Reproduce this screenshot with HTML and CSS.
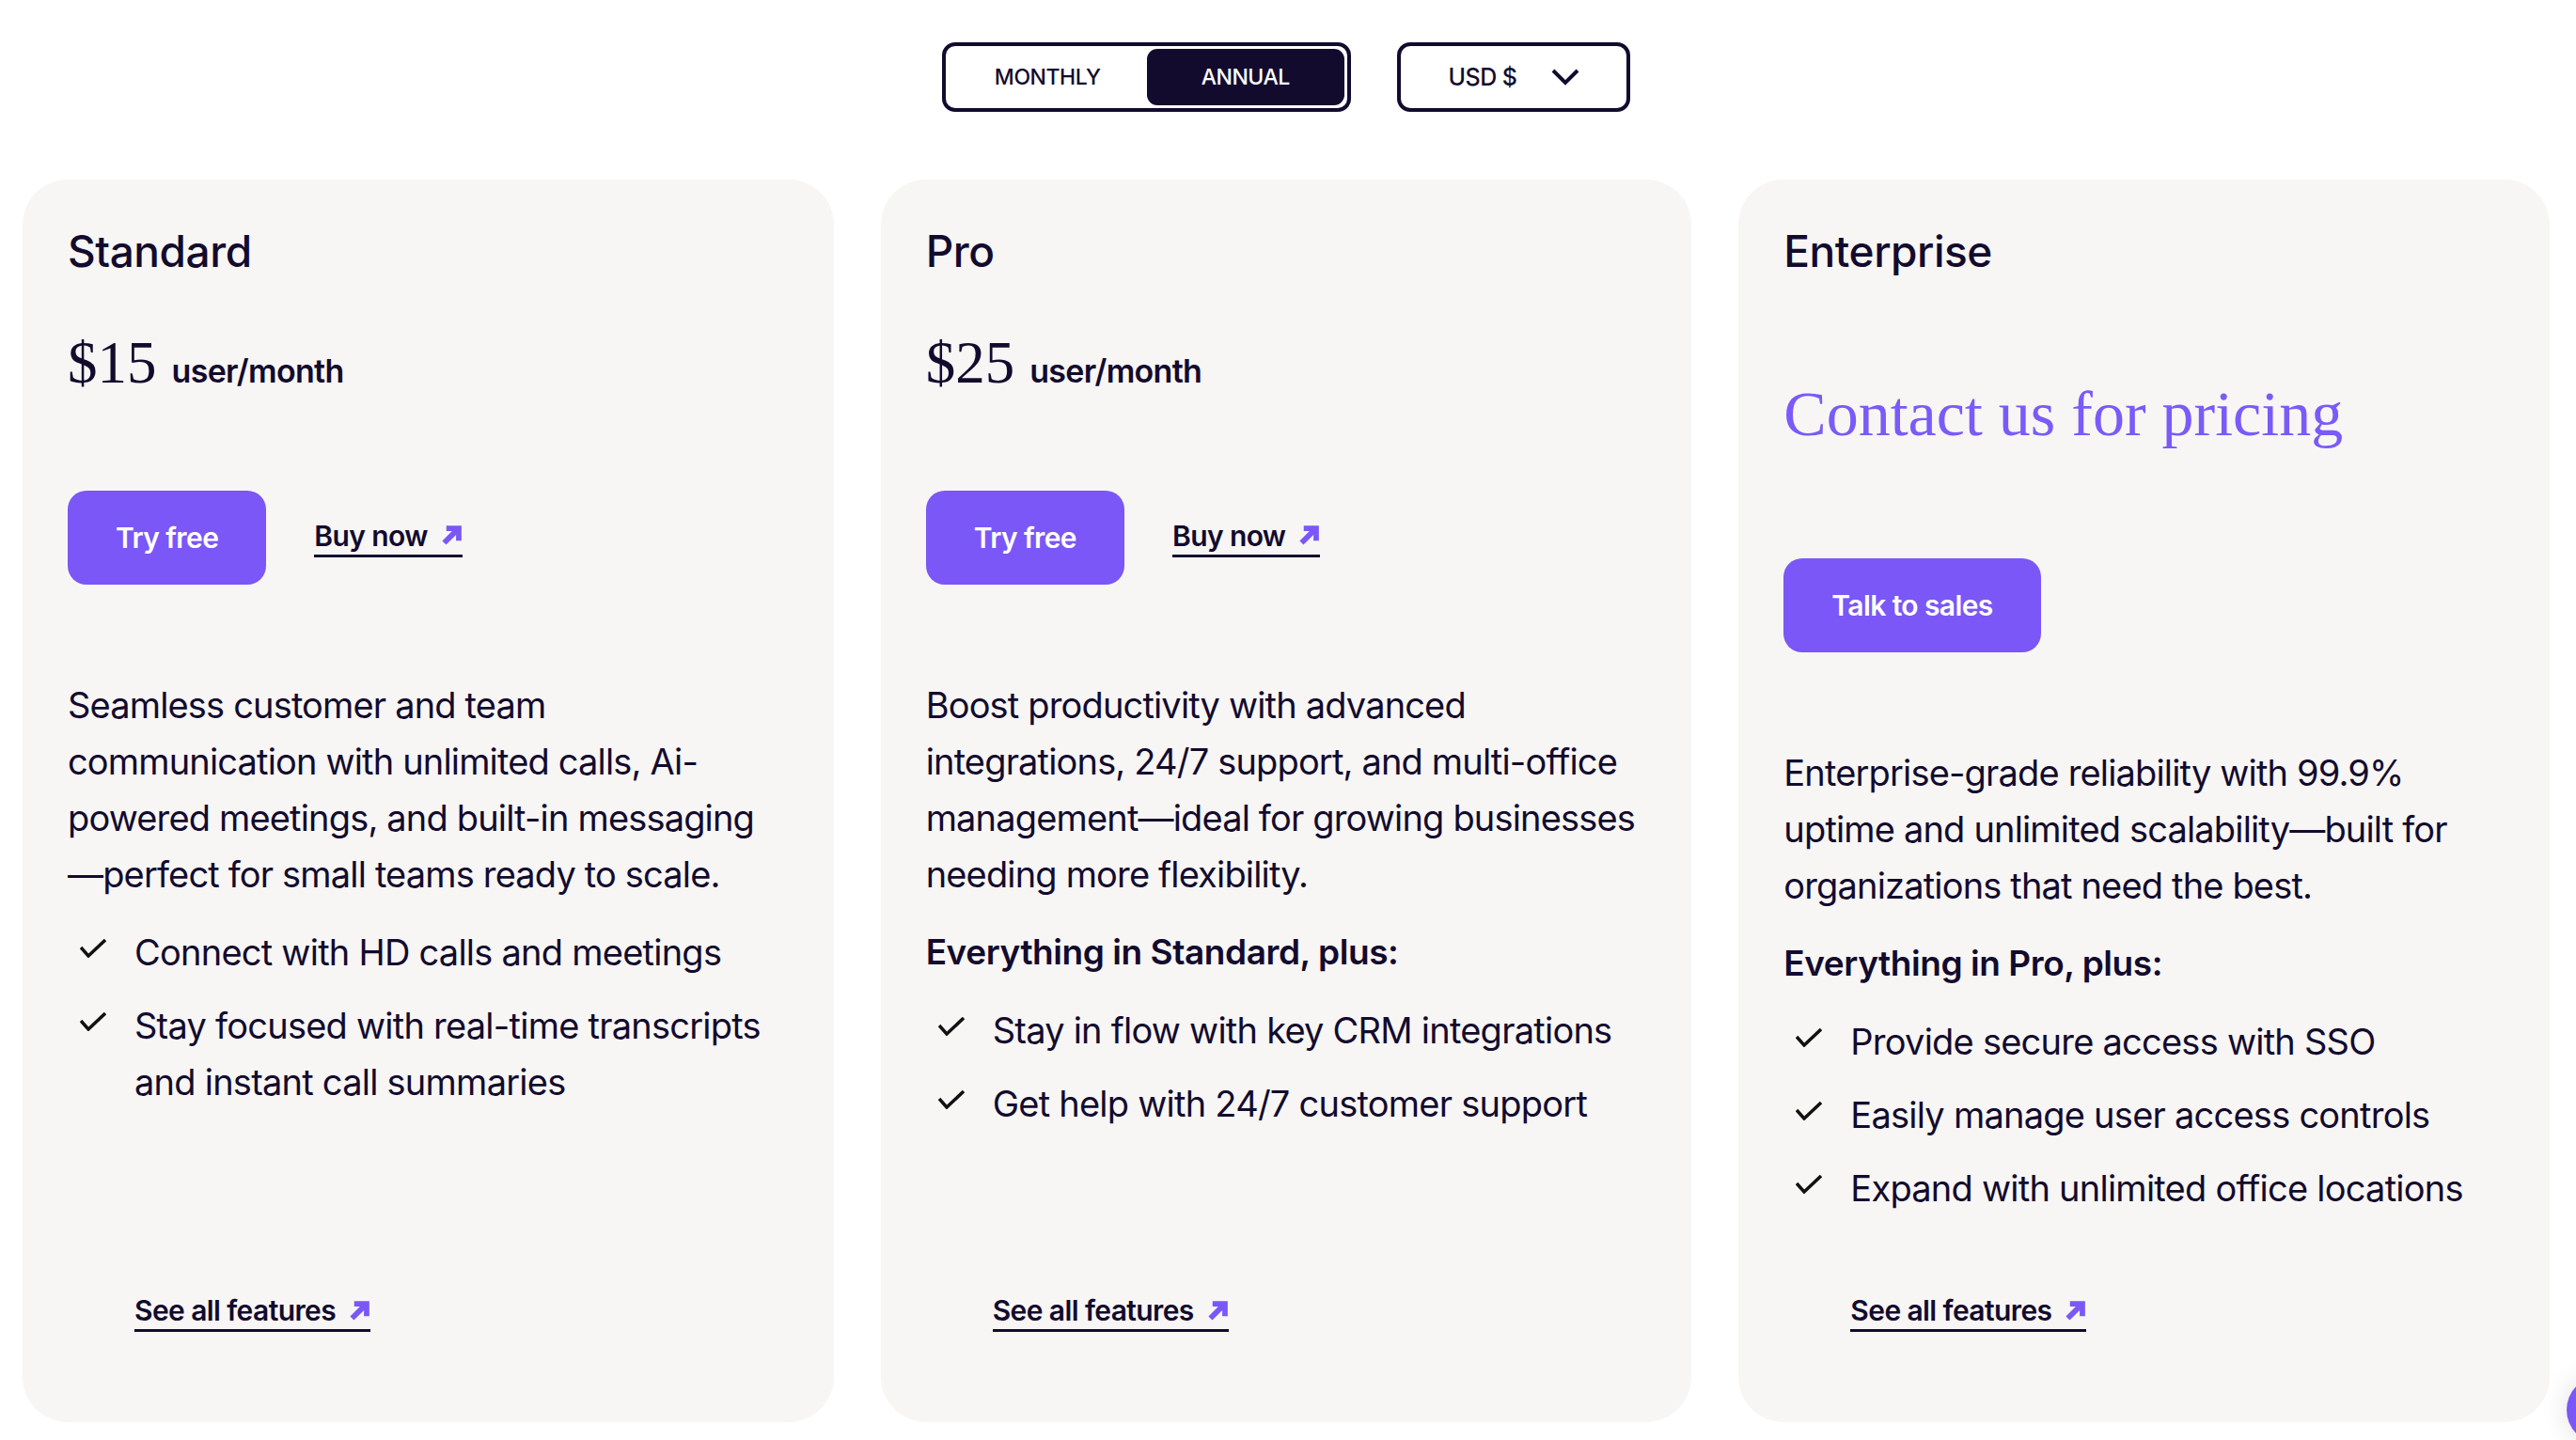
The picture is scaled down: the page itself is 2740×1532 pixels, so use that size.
FILE: index.html
```html
<!DOCTYPE html>
<html lang="en">
<head>
    <meta charset="UTF-8">
    <meta name="viewport" content="width=device-width, initial-scale=1.0">
    <title>Pricing</title>
    <link rel="stylesheet" href="styles.css">
</head>
<body>
    <div class="controls">
        <div class="billing-toggle">
            <button class="billing-option">Monthly</button>
            <button class="billing-option active">Annual</button>
        </div>
        <button class="currency-select">
            USD $
            <svg class="chevron" viewBox="0 0 30 18"><polyline points="2,2 15,15 28,2" /></svg>
        </button>
    </div>

    <div class="plans">
        <div class="plan">
            <h3 class="plan-name">Standard</h3>
            <div class="plan-price"><span class="amount">$15</span><span class="unit">user/month</span></div>
            <div class="plan-actions">
                <a href="#" class="btn-primary">Try free</a>
                <a href="#" class="link-arrow">Buy now
                    <svg class="arrow" viewBox="0 0 20 20"><path d="M3 17 L14 6 M5 3.5 H16.5 V15" /></svg>
                </a>
            </div>
            <p class="plan-desc">Seamless customer and team communication with unlimited calls, Ai-powered meetings, and built-in messaging—&#8288;perfect for small teams ready to scale.</p>
            <ul class="features">
                <li><svg class="check" viewBox="0 0 28 20"><polyline points="1,9 9,18 27,1" /></svg><span>Connect with HD calls and meetings</span></li>
                <li><svg class="check" viewBox="0 0 28 20"><polyline points="1,9 9,18 27,1" /></svg><span>Stay focused with real-time transcripts and instant call summaries</span></li>
            </ul>
            <a href="#" class="link-arrow see-all">See all features
                <svg class="arrow" viewBox="0 0 20 20"><path d="M3 17 L14 6 M5 3.5 H16.5 V15" /></svg>
            </a>
        </div>

        <div class="plan">
            <h3 class="plan-name">Pro</h3>
            <div class="plan-price"><span class="amount">$25</span><span class="unit">user/month</span></div>
            <div class="plan-actions">
                <a href="#" class="btn-primary">Try free</a>
                <a href="#" class="link-arrow">Buy now
                    <svg class="arrow" viewBox="0 0 20 20"><path d="M3 17 L14 6 M5 3.5 H16.5 V15" /></svg>
                </a>
            </div>
            <p class="plan-desc">Boost productivity with advanced integrations, 24/7 support, and multi-office management—ideal for growing businesses needing more flexibility.</p>
            <h4 class="plan-includes">Everything in Standard, plus:</h4>
            <ul class="features">
                <li><svg class="check" viewBox="0 0 28 20"><polyline points="1,9 9,18 27,1" /></svg><span>Stay in flow with key CRM integrations</span></li>
                <li><svg class="check" viewBox="0 0 28 20"><polyline points="1,9 9,18 27,1" /></svg><span>Get help with 24/7 customer support</span></li>
            </ul>
            <a href="#" class="link-arrow see-all">See all features
                <svg class="arrow" viewBox="0 0 20 20"><path d="M3 17 L14 6 M5 3.5 H16.5 V15" /></svg>
            </a>
        </div>

        <div class="plan">
            <h3 class="plan-name">Enterprise</h3>
            <div class="plan-contact">Contact us for pricing</div>
            <div class="plan-actions">
                <a href="#" class="btn-primary">Talk to sales</a>
            </div>
            <p class="plan-desc">Enterprise-grade reliability with 99.9% uptime and unlimited scalability—built for organizations that need the best.</p>
            <h4 class="plan-includes">Everything in Pro, plus:</h4>
            <ul class="features">
                <li><svg class="check" viewBox="0 0 28 20"><polyline points="1,9 9,18 27,1" /></svg><span>Provide secure access with SSO</span></li>
                <li><svg class="check" viewBox="0 0 28 20"><polyline points="1,9 9,18 27,1" /></svg><span>Easily manage user access controls</span></li>
                <li><svg class="check" viewBox="0 0 28 20"><polyline points="1,9 9,18 27,1" /></svg><span>Expand with unlimited office locations</span></li>
            </ul>
            <a href="#" class="link-arrow see-all">See all features
                <svg class="arrow" viewBox="0 0 20 20"><path d="M3 17 L14 6 M5 3.5 H16.5 V15" /></svg>
            </a>
        </div>
    </div>

    <div class="chat-launcher"></div>
</body>
</html>
```

FILE: styles.css
```css
body {
    margin: 0;
    font-family: 'Inter', 'Noto Sans', sans-serif;
    color: #130b2e;
    background: #fff;
}
.controls {
    display: flex;
    justify-content: center;
    gap: 49px;
    padding: 45px 28px 0 24px;
}
.billing-toggle {
    display: flex;
    width: 435px;
    height: 74px;
    box-sizing: border-box;
    border: 4px solid #130b2e;
    border-radius: 14px;
    padding: 3px;
    background: #fff;
}
.billing-option {
    flex: 1;
    border: none;
    background: none;
    border-radius: 11px;
    font-family: 'Inter', sans-serif;
    font-size: 23px;
    font-weight: 500;
    letter-spacing: -0.02em;
    text-transform: uppercase;
    color: #130b2e;
    cursor: pointer;
}
.billing-option.active {
    background: #130b2e;
    color: #fff;
}
.currency-select {
    width: 248px;
    height: 74px;
    box-sizing: border-box;
    border: 4px solid #130b2e;
    border-radius: 14px;
    background: #fff;
    display: flex;
    align-items: center;
    justify-content: center;
    gap: 36px;
    font-family: 'Inter', sans-serif;
    font-size: 25px;
    font-weight: 500;
    letter-spacing: -0.02em;
    color: #130b2e;
    cursor: pointer;
}
.chevron {
    width: 30px;
    height: 18px;
    fill: none;
    stroke: #130b2e;
    stroke-width: 4;
}
.plans {
    display: grid;
    grid-template-columns: repeat(3, 1fr);
    gap: 50px;
    padding: 72px 28px 0 24px;
}
.plan {
    background: #f7f6f4;
    border-radius: 48px;
    min-height: 1322px;
    box-sizing: border-box;
    padding: 50px 36px 96px 48px;
    display: flex;
    flex-direction: column;
    align-items: flex-start;
}
.plan-name {
    margin: 0;
    font-size: 46px;
    font-weight: 500;
    line-height: 52px;
    letter-spacing: -0.01em;
}
.plan-price {
    display: flex;
    align-items: baseline;
    margin-top: 61px;
    height: 64px;
}
.amount {
    font-family: 'Liberation Serif', serif;
    font-size: 63px;
    line-height: 64px;
}
.unit {
    margin-left: 16px;
    font-size: 34px;
    font-weight: 600;
    letter-spacing: -0.02em;
}
.plan-contact {
    margin-top: 107px;
    font-family: 'Liberation Serif', serif;
    font-size: 68px;
    line-height: 80px;
    color: #7a5af8;
}
.plan-actions {
    display: flex;
    align-items: center;
    gap: 51px;
    margin-top: 104px;
}
.plan-contact + .plan-actions {
    margin-top: 114px;
}
.btn-primary {
    display: inline-flex;
    align-items: center;
    height: 100px;
    box-sizing: border-box;
    padding: 0 51px;
    background: #7a57f6;
    color: #fff;
    border-radius: 20px;
    font-size: 30px;
    font-weight: 600;
    letter-spacing: -0.02em;
    text-decoration: none;
}
.link-arrow {
    display: inline-flex;
    align-items: center;
    gap: 14px;
    font-size: 30px;
    font-weight: 600;
    line-height: 36px;
    letter-spacing: -0.02em;
    color: #130b2e;
    text-decoration: none;
    padding-bottom: 2px;
    border-bottom: 3px solid #130b2e;
}
.arrow {
    width: 23px;
    height: 23px;
    fill: none;
    stroke: #7a57f6;
    stroke-width: 5;
}
.plan-desc {
    margin: 98px 0 0;
    font-size: 38px;
    line-height: 60px;
    letter-spacing: -0.022em;
}
.plan-includes {
    margin: 23px 0 0;
    font-size: 37px;
    font-weight: 600;
    line-height: 60px;
    letter-spacing: -0.012em;
}
.features {
    list-style: none;
    margin: 23px 0 0;
    padding: 0;
    display: flex;
    flex-direction: column;
    gap: 18px;
}
.features li {
    display: flex;
    align-items: flex-start;
    font-size: 38px;
    line-height: 60px;
    letter-spacing: -0.02em;
}
.check {
    flex: none;
    width: 28px;
    height: 20px;
    margin: 16px 30px 0 13px;
    fill: none;
    stroke: #111;
    stroke-width: 3.5;
}
.see-all {
    margin-top: auto;
    margin-left: 71px;
}
.chat-launcher {
    position: fixed;
    right: -62px;
    bottom: -4px;
    width: 72px;
    height: 72px;
    border-radius: 50%;
    background: #7a57f6;
    box-shadow: 0 0 30px rgba(0, 0, 0, 0.12);
}
```
